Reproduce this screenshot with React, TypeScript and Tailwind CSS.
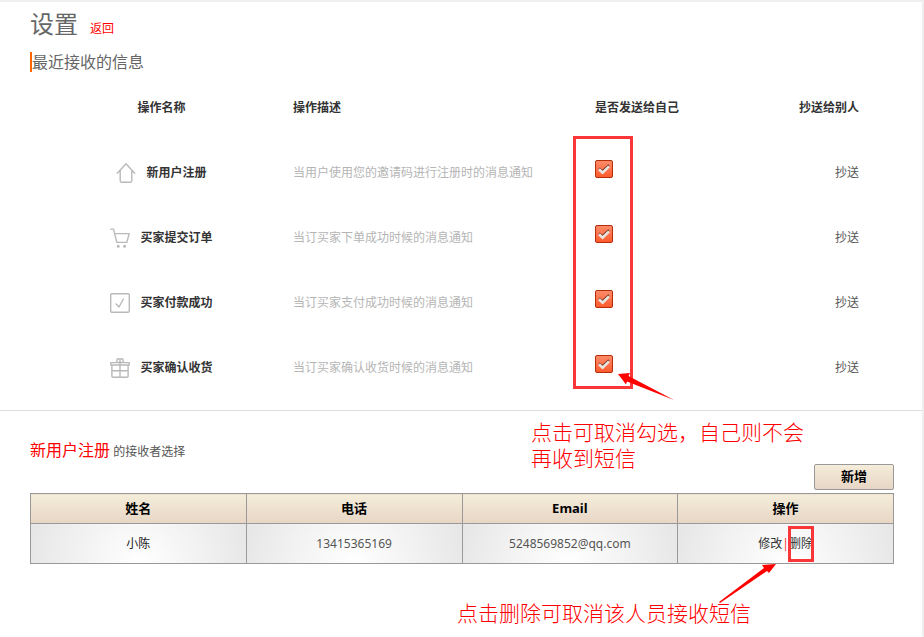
import type { ReactNode } from 'react';

interface Notice {
  name: string;
  desc: string;
  icon: ReactNode;
}

interface Receiver {
  name: string;
  phone: string;
  email: string;
}

const iconProps = {
  viewBox: '0 0 20 20',
  fill: 'none',
  stroke: '#b9b9b9',
  strokeWidth: 1.4,
  strokeLinecap: 'round',
  strokeLinejoin: 'round',
} as const;

const HomeIcon = () => (
  <svg {...iconProps} className="h-5 w-5 shrink-0">
    <path d="M1.3 10.2 10 .8l8.7 9.4M4.2 7.6v10.2a1.4 1.4 0 0 0 1.4 1.4h8.8a1.4 1.4 0 0 0 1.4-1.4V7.6" />
  </svg>
);

const CartIcon = () => (
  <svg {...iconProps} className="h-5 w-5 shrink-0">
    <path d="M.7 1.1h2.8l3.3 13.3h10l2.4-8.8H4.7" />
    <circle cx="8.2" cy="18.2" r=".8" fill="#b9b9b9" />
    <circle cx="14.6" cy="18.2" r=".8" fill="#b9b9b9" />
  </svg>
);

const PaidIcon = () => (
  <svg {...iconProps} className="h-5 w-5 shrink-0">
    <rect x=".7" y=".7" width="18.6" height="18.6" rx="1.4" />
    <path d="m6.2 11 2.8 3 4.4-8" />
  </svg>
);

const GiftIcon = () => (
  <svg {...iconProps} className="h-5 w-5 shrink-0">
    <path d="M.7 4.6h18.6V7H.7zM1.9 7v11.2a1 1 0 0 0 1 1h14.2a1 1 0 0 0 1-1V7M1.9 12.7h16.2M10 4.8v14.4" />
    <path d="M10 4.4H6.8V2.4C6.8 1.4 7.4.8 8.4.8S10 1.4 10 2.4zM10 4.4h3.2V2.4c0-1-.6-1.6-1.6-1.6S10 1.4 10 2.4z" />
  </svg>
);

const notices: Notice[] = [
  { name: '新用户注册', desc: '当用户使用您的邀请码进行注册时的消息通知', icon: <HomeIcon /> },
  { name: '买家提交订单', desc: '当订买家下单成功时候的消息通知', icon: <CartIcon /> },
  { name: '买家付款成功', desc: '当订买家支付成功时候的消息通知', icon: <PaidIcon /> },
  { name: '买家确认收货', desc: '当订买家确认收货时候的消息通知', icon: <GiftIcon /> },
];

const receivers: Receiver[] = [
  { name: '小陈', phone: '13415365169', email: '5248569852@qq.com' },
];

function SendCheckbox({ label }: { label: string }) {
  return (
    <label className="relative block h-[18px] w-[18px] cursor-pointer">
      <input
        type="checkbox"
        defaultChecked
        aria-label={label}
        className="peer block h-[18px] w-[18px] appearance-none rounded-xs border border-[#b52e0c] bg-linear-to-b from-[#ff8a68] to-[#ff5a2c]"
      />
      <svg viewBox="0 0 18 18" fill="none" className="pointer-events-none absolute inset-0 hidden h-[18px] w-[18px] peer-checked:block">
        <path d="M4 8.4 7.4 11 14 5.2" stroke="#7a3a28" strokeWidth="2.2" />
        <path d="m4 9.2 3.6 3.4L14 6.4" stroke="#e8e6e0" strokeWidth="2.6" />
      </svg>
    </label>
  );
}

export default function App() {
  return (
    <div className="flex min-h-screen flex-col bg-[#efefef] pt-0.5 pr-0.5 font-['Noto_Sans','Noto_Sans_CJK_SC',sans-serif] text-xs text-[#555]">
      <main className="flex-1 bg-white">
        <header className="flex items-baseline gap-3 pt-1.5 pl-[30px]">
          <h1 className="text-2xl leading-8 text-[#666]">设置</h1>
          <a href="#back" className="text-[#f00]">返回</a>
        </header>

        <section>
          <h2 className="mt-3 ml-[30px] border-l-2 border-[#f60] text-base leading-5 text-[#666]">最近接收的信息</h2>

          <div className="relative mr-[63px] ml-[30px]">
            <table className="w-full table-fixed">
              <colgroup>
                <col className="w-[263px]" />
                <col className="w-[302px]" />
                <col />
                <col />
              </colgroup>
              <thead>
                <tr className="h-[68px] text-left text-[#333]">
                  <th className="pt-1 text-center">操作名称</th>
                  <th className="pt-1">操作描述</th>
                  <th className="pt-1">是否发送给自己</th>
                  <th className="pt-1 text-right">抄送给别人</th>
                </tr>
              </thead>
              <tbody>
                {notices.map((n) => (
                  <tr key={n.name} className="h-[65px]">
                    <td>
                      <div className="flex items-center justify-center gap-2.5 font-bold text-[#333]">
                        {n.icon}
                        {n.name}
                      </div>
                    </td>
                    <td className="text-[#b5b5b5]">{n.desc}</td>
                    <td className="pb-2">
                      <SendCheckbox label={n.name} />
                    </td>
                    <td className="text-right">
                      <a href="#copy">抄送</a>
                    </td>
                  </tr>
                ))}
              </tbody>
            </table>

            {/* highlight around the checkbox column */}
            <div className="pointer-events-none absolute top-16 left-[543px] h-[253px] w-[60px] border-3 border-[#fb3638]" />
            <svg viewBox="0 0 56 28" className="pointer-events-none absolute top-[301px] left-[588px] h-7 w-14">
              <path d="M0 1 12 0l-1.5 3L56 27 9 8.500l-1 3z" fill="#f00" />
            </svg>
          </div>
        </section>

        <section className="relative mt-2.5 border-t border-[#ddd] pr-7 pl-[30px]">
          <p className="absolute top-2 left-[531px] w-[280px] text-[21px] leading-[26px] font-light text-[#f00]">
            点击可取消勾选，自己则不会再收到短信
          </p>

          <h3 className="pt-[27px] leading-6">
            <span className="text-base leading-6 text-[#f00]">新用户注册</span> 的接收者选择
          </h3>

          <div className="flex justify-end">
            <button
              type="button"
              className="h-[26px] w-20 rounded-xs border border-[#999] bg-linear-to-b from-[#f5ecda] to-[#e7d6c5] text-[13px] font-bold text-black"
            >
              新增
            </button>
          </div>

          <table className="mt-[3px] w-full table-fixed border-collapse text-center">
            <thead>
              <tr className="h-[30px] text-[13px] text-black">
                {['姓名', '电话', 'Email', '操作'].map((title) => (
                  <th key={title} className="border border-[#999] bg-linear-to-b from-[#f5ecda] to-[#e7d6c5]">
                    {title}
                  </th>
                ))}
              </tr>
            </thead>
            <tbody>
              {receivers.map((r) => (
                <tr
                  key={r.phone}
                  className="h-10 *:border *:border-[#999] *:bg-[radial-gradient(circle_at_50%_100%,#fff,#e6e6e6)]"
                >
                  <td className="text-[#222]">{r.name}</td>
                  <td>{r.phone}</td>
                  <td>{r.email}</td>
                  <td className="text-[#333]">
                    <a href="#edit">修改</a>
                    <span className="text-[#f33]">|</span>
                    <span className="relative inline-block">
                      <a href="#delete">删除</a>
                      <span className="pointer-events-none absolute -inset-x-px -inset-y-2.5 border-3 border-[#fb3638]" />
                    </span>
                  </td>
                </tr>
              ))}
            </tbody>
          </table>

          <div className="relative pt-[35px] pl-[427px]">
            <svg viewBox="0 0 58 40" className="pointer-events-none absolute top-0 left-[689px] h-10 w-[58px]">
              <path d="M57 0 50 9l-2-2L1 39 0 38 45 4l-2-3z" fill="#f00" />
            </svg>
            <p className="text-[21px] leading-7 font-light text-[#f00]">点击删除可取消该人员接收短信</p>
          </div>
        </section>
      </main>
    </div>
  );
}
